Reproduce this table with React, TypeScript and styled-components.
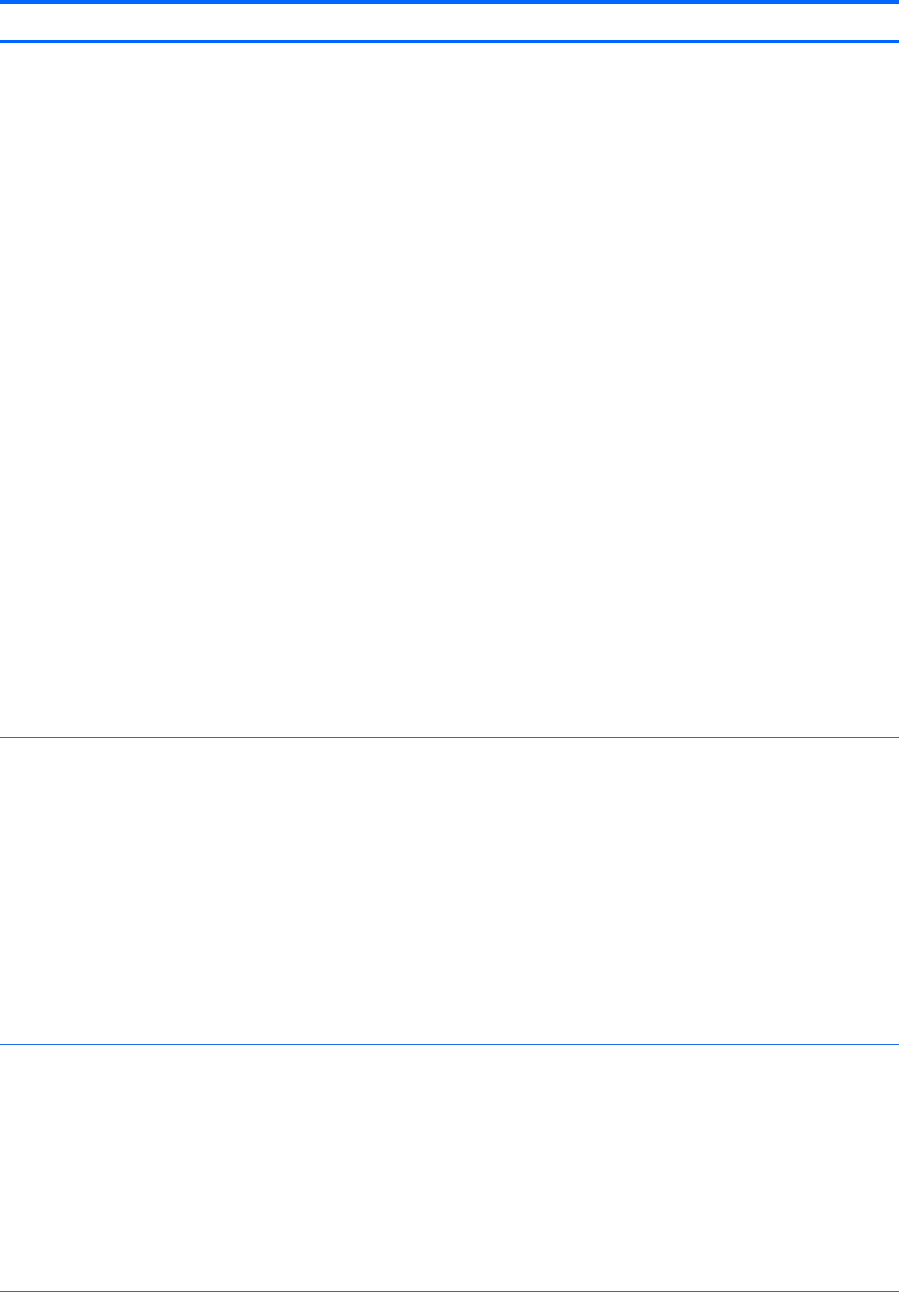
import styled, { createGlobalStyle } from "styled-components";

const GlobalStyle = createGlobalStyle`
  html, body {
    margin: 0;
    padding: 0;
    background: #ffffff;
    font-family: "Liberation Sans", Arial, sans-serif;
  }
`;

const Page = styled.div`
  width: 899px;
  display: flex;
  flex-direction: column;
`;

const Rule = styled.div<{ $thickness: number; $color?: string }>`
  height: ${(p) => p.$thickness}px;
  background-color: ${(p) => p.$color ?? "#0066ff"};
`;

const Section = styled.div<{ $height: number }>`
  height: ${(p) => p.$height}px;
`;

const App = () => {
  return (
    <>
      <GlobalStyle />
      <Page>
        <Rule $thickness={4} />
        <Section $height={36} />
        <Rule $thickness={3} />
        <Section $height={694} />
        <Rule $thickness={1} $color="#1a6ee8" />
        <Section $height={306} />
        <Rule $thickness={1} $color="#1a6ee8" />
        <Section $height={246} />
        <Rule $thickness={1} $color="#1a6ee8" />
      </Page>
    </>
  );
};

export default App;
